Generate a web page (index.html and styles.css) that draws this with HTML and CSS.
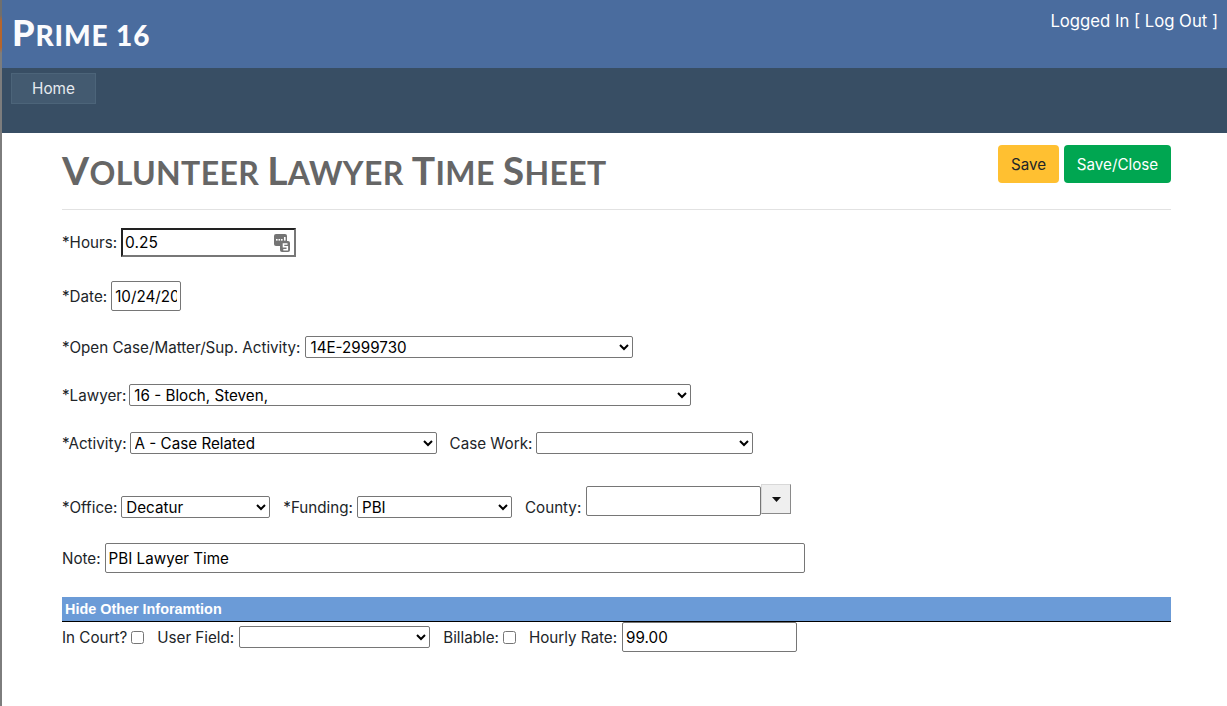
FILE: index.html
```html
<!DOCTYPE html>
<html lang="en">
<head>
<meta charset="utf-8">
<title>Volunteer Lawyer Time Sheet</title>
<link rel="stylesheet" href="styles.css">
</head>
<body>
<div class="page">
  <header class="topbar">
    <div class="brand"><span class="cap">P</span>rime 16</div>
    <div class="login">Logged In [ Log Out ]</div>
  </header>
  <nav class="navbar"><a class="navitem">Home</a></nav>
  <main class="content">
    <div class="titlerow">
      <h1><span class="cap">V</span>olunteer <span class="cap">L</span>awyer <span class="cap">T</span>ime <span class="cap">S</span>heet</h1>
      <div class="actions">
        <button class="btn btn-save">Save</button>
        <button class="btn btn-close">Save/Close</button>
      </div>
    </div>
    <form class="form">
      <div class="row row-hours">
        <label>*Hours:</label>
        <span class="hours">
          <span class="hours-val">0.25</span>
          <svg class="hours-icon" width="16" height="18" viewBox="0 0 16 18"><rect x="0" y="0" width="13" height="12" rx="2" fill="#747474"/><rect x="6" y="7" width="10" height="11" rx="2" fill="#747474"/><rect x="2" y="5" width="1.600" height="1.600" fill="#fff"/><rect x="4.500" y="5" width="1.600" height="1.600" fill="#fff"/><rect x="7" y="5" width="1.600" height="1.600" fill="#fff"/><rect x="10" y="3" width="1.600" height="3.600" fill="#fff"/><path fill="none" stroke="#fff" stroke-width="1.600" d="M13.500 10h-4v2.800h3.800v2.900h-4"/></svg>
        </span>
      </div>
      <div class="row row-date">
        <label>*Date:</label>
        <input class="field date" type="text" value="10/24/2022">
      </div>
      <div class="row row-case">
        <label>*Open Case/Matter/Sup. Activity:</label>
        <select class="field w-case"><option>14E-2999730</option></select>
      </div>
      <div class="row row-lawyer">
        <label>*Lawyer:</label>
        <select class="field w-lawyer"><option>16 - Bloch, Steven,</option></select>
      </div>
      <div class="row row-activity">
        <label>*Activity:</label>
        <select class="field w-activity"><option>A - Case Related</option></select>
        <label class="gap">Case Work:</label>
        <select class="field w-casework"><option></option></select>
      </div>
      <div class="row row-office">
        <label>*Office:</label>
        <select class="field w-office"><option>Decatur</option></select>
        <label class="gap">*Funding:</label>
        <select class="field w-funding"><option>PBI</option></select>
        <label class="gap">County:</label>
        <span class="combo">
          <input class="field county" type="text">
          <span class="combo-btn"><svg width="9" height="5" viewBox="0 0 9 5"><path d="M0 0h9L4.500 5z" fill="#111"/></svg></span>
        </span>
      </div>
      <div class="row row-note">
        <label>Note:</label>
        <input class="field note" type="text" value="PBI Lawyer Time">
      </div>
      <div class="section">Hide Other Inforamtion</div>
      <div class="row row-other">
        <label>In Court?</label>
        <input class="check" type="checkbox">
        <label class="gap">User Field:</label>
        <select class="field w-user"><option></option></select>
        <label class="gap">Billable:</label>
        <input class="check" type="checkbox">
        <label class="gap">Hourly Rate:</label>
        <input class="field rate" type="text" value="99.00">
      </div>
    </form>
  </main>
</div>
</body>
</html>
```
FILE: styles.css
```css
* { box-sizing: border-box; }
html, body { margin: 0; height: 100%; }
body {
  font-family: Inter, "Liberation Sans", sans-serif;
  font-size: 15.200px;
  color: #212529;
  background: #fff;
  overflow: hidden;
}
.page {
  min-height: 706px;
  border-left: 2px solid #7d7d7d;
  border-image: linear-gradient(to bottom, #6f6f6f 0, #6f6f6f 16px, #b5652c 22px, #b5652c 48px, #7d7d7d 54px, #7d7d7d 100%) 1;
}
.topbar {
  height: 68px;
  background: #4a6c9e;
  display: flex;
  justify-content: space-between;
  align-items: flex-start;
  padding: 0 9px 0 10px;
}
.brand {
  font-family: Lato, sans-serif;
  font-weight: 900;
  text-transform: uppercase;
  font-size: 28px;
  line-height: 36px;
  letter-spacing: 0.900px;
  margin-top: 14px;
  color: #fbfbfd;
}
.brand .cap { font-size: 36px; }
.login { color: #fff; font-size: 16.700px; line-height: 20px; margin-top: 11px; }
.navbar { height: 65px; background: #384e64; padding: 5px 9px; }
.navitem {
  display: flex;
  align-items: center;
  justify-content: center;
  width: 85px;
  height: 31px;
  background: #435a70;
  border: 1px solid #4c6479;
  color: #e6eaef;
  font-size: 15.300px;
}
.content { padding: 0 56px 0 60px; }
.titlerow {
  display: flex;
  justify-content: space-between;
  align-items: flex-start;
  height: 77px;
  border-bottom: 1px solid #e2e2e2;
  padding-top: 12px;
}
h1 {
  margin: 0;
  font-family: Lato, sans-serif;
  font-weight: 700;
  text-transform: uppercase;
  font-size: 32px;
  line-height: 50px;
  letter-spacing: 0.350px;
  color: #666;
}
h1 .cap { font-size: 39px; }
.actions { display: flex; gap: 5px; }
.btn {
  height: 38px;
  border: 0;
  border-radius: 4px;
  font: inherit;
  padding: 0;
}
.btn-save { width: 61px; background: #ffc031; color: #212529; }
.btn-close { width: 107px; background: #00a651; color: #fff; }
.form { display: flex; flex-direction: column; }
.row { display: flex; align-items: center; }
.row label { margin-right: 4px; white-space: nowrap; }
.row label.gap { margin-left: 13px; }
.field {
  font-family: Inter, sans-serif;
  font-size: 15.200px;
  color: #000;
  background: #fff;
  border: 1px solid #767676;
  border-radius: 2px;
  padding: 0;
  height: 22px;
  margin: 0;
}
input.field { height: 30px; padding: 0 3px; }
.row-hours { margin-top: 18px; height: 29px; }
.hours {
  display: flex;
  align-items: center;
  justify-content: space-between;
  width: 175px;
  height: 29px;
  border: 2px solid;
  border-color: #222 #777 #777 #222;
  color: #000;
  font-size: 15.500px;
  padding: 0 4px 0 2px;
}
.hours-icon { margin-top: 1px; }
.row-date { margin-top: 24px; height: 30px; }
.date { width: 70px; }
.row-case { margin-top: 25px; height: 22px; }
.w-case { width: 328px; margin-left: 1px; }
.row-lawyer { margin-top: 26px; height: 22px; }
.w-lawyer { width: 562px; margin-left: -1px; }
.row-activity { margin-top: 26px; height: 22px; }
.w-activity { width: 307px; margin-left: -1px; }
.w-casework { width: 217px; }
.row-office { margin-top: 30px; height: 34px; align-items: flex-end; }
.w-office { width: 149px; }
.w-funding { width: 155px; }
.row-office label { line-height: 20px; }
.combo { display: flex; align-items: flex-start; align-self: flex-start; margin-left: 1px; }
.county { width: 175px; margin-top: 2px; }
.combo-btn {
  display: flex;
  align-items: center;
  justify-content: center;
  width: 30px;
  height: 30px;
  background: #efefef;
  border: 1px solid;
  border-color: #d8d8d8 #8a8a8a #8a8a8a #d8d8d8;
}
.row-note { margin-top: 25px; height: 30px; }
.note { width: 700px; }
.section {
  margin-top: 24px;
  height: 25px;
  background: #6b9bd7;
  border-bottom: 1px solid #000;
  color: #fff;
  font-family: "Liberation Sans", sans-serif;
  font-weight: 700;
  font-size: 14.400px;
  line-height: 24px;
  padding-left: 3px;
}
.row-other { height: 30px; }
.check { width: 13px; height: 13px; margin: 0 13px 0 0; }
.row-other .check + label.gap { margin-left: 0; }
.w-user { width: 191px; margin-left: 1px; }
.rate { width: 175px; margin-left: 1px; }
```
